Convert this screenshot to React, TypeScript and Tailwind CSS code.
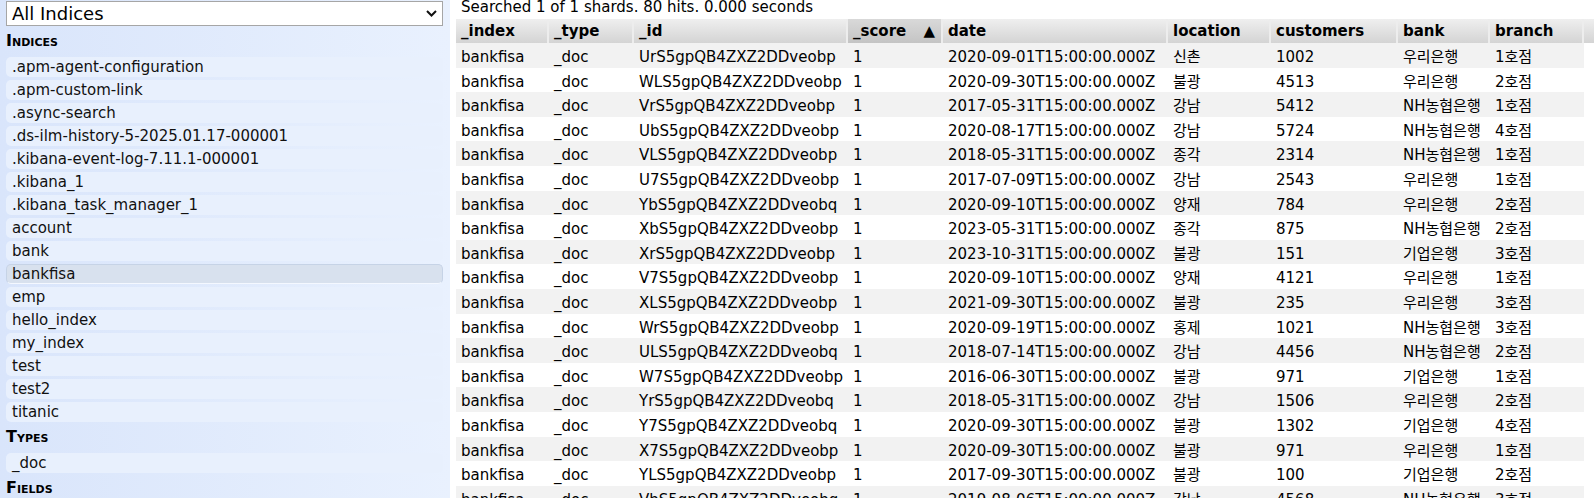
import React from "react";

const FONT = '"DejaVu Sans", "Noto Sans CJK KR", sans-serif';

const indices = [
  ".apm-agent-configuration",
  ".apm-custom-link",
  ".async-search",
  ".ds-ilm-history-5-2025.01.17-000001",
  ".kibana-event-log-7.11.1-000001",
  ".kibana_1",
  ".kibana_task_manager_1",
  "account",
  "bank",
  "bankfisa",
  "emp",
  "hello_index",
  "my_index",
  "test",
  "test2",
  "titanic",
];

const widths = [93, 85, 214, 95, 225, 103, 127, 92, 94];
const headers = ["_index", "_type", "_id", "_score", "date", "location", "customers", "bank", "branch"];

const rows: string[][] = [
  ["UrS5gpQB4ZXZ2DDveobp", "2020-09-01T15:00:00.000Z", "신촌", "1002", "우리은행", "1호점"],
  ["WLS5gpQB4ZXZ2DDveobp", "2020-09-30T15:00:00.000Z", "불광", "4513", "우리은행", "2호점"],
  ["VrS5gpQB4ZXZ2DDveobp", "2017-05-31T15:00:00.000Z", "강남", "5412", "NH농협은행", "1호점"],
  ["UbS5gpQB4ZXZ2DDveobp", "2020-08-17T15:00:00.000Z", "강남", "5724", "NH농협은행", "4호점"],
  ["VLS5gpQB4ZXZ2DDveobp", "2018-05-31T15:00:00.000Z", "종각", "2314", "NH농협은행", "1호점"],
  ["U7S5gpQB4ZXZ2DDveobp", "2017-07-09T15:00:00.000Z", "강남", "2543", "우리은행", "1호점"],
  ["YbS5gpQB4ZXZ2DDveobq", "2020-09-10T15:00:00.000Z", "양재", "784", "우리은행", "2호점"],
  ["XbS5gpQB4ZXZ2DDveobp", "2023-05-31T15:00:00.000Z", "종각", "875", "NH농협은행", "2호점"],
  ["XrS5gpQB4ZXZ2DDveobp", "2023-10-31T15:00:00.000Z", "불광", "151", "기업은행", "3호점"],
  ["V7S5gpQB4ZXZ2DDveobp", "2020-09-10T15:00:00.000Z", "양재", "4121", "우리은행", "1호점"],
  ["XLS5gpQB4ZXZ2DDveobp", "2021-09-30T15:00:00.000Z", "불광", "235", "우리은행", "3호점"],
  ["WrS5gpQB4ZXZ2DDveobp", "2020-09-19T15:00:00.000Z", "홍제", "1021", "NH농협은행", "3호점"],
  ["ULS5gpQB4ZXZ2DDveobq", "2018-07-14T15:00:00.000Z", "강남", "4456", "NH농협은행", "2호점"],
  ["W7S5gpQB4ZXZ2DDveobp", "2016-06-30T15:00:00.000Z", "불광", "971", "기업은행", "1호점"],
  ["YrS5gpQB4ZXZ2DDveobq", "2018-05-31T15:00:00.000Z", "강남", "1506", "우리은행", "2호점"],
  ["Y7S5gpQB4ZXZ2DDveobq", "2020-09-30T15:00:00.000Z", "불광", "1302", "기업은행", "4호점"],
  ["X7S5gpQB4ZXZ2DDveobp", "2020-09-30T15:00:00.000Z", "불광", "971", "우리은행", "1호점"],
  ["YLS5gpQB4ZXZ2DDveobp", "2017-09-30T15:00:00.000Z", "불광", "100", "기업은행", "2호점"],
  ["VbS5gpQB4ZXZ2DDveobq", "2019-08-06T15:00:00.000Z", "강남", "4568", "NH농협은행", "3호점"],
];

function Heading({ children }: { children: React.ReactNode }) {
  return (
    <div className="h-[28px] pt-[5px] leading-[20px] font-bold text-[16px] text-black [font-variant:small-caps]">
      {children}
    </div>
  );
}

function Pill({ label, selected }: { label: string; selected?: boolean }) {
  return (
    <div
      className={
        "mt-[3px] h-[20px] leading-[18px] rounded-[5px] pl-[5px] text-[15px] text-[#111] whitespace-nowrap " +
        (selected
          ? "bg-[#d8e1ee] border border-[#c6d3e6] border-b-[#f4f8ff]"
          : "bg-[#e8f0fd] border border-transparent")
      }
    >
      {label}
    </div>
  );
}

export default function App() {
  return (
    <div
      className="flex w-[1594px] h-[498px] overflow-hidden bg-white text-black"
      style={{ fontFamily: FONT }}
    >
      <div className="w-[450px] shrink-0 h-full pl-[6px] pr-[7px] bg-gradient-to-r from-[#d9e5fb] to-[#e9f1fe]">
        <div className="mt-[1px] h-[25px] border border-[#a6a6a6] bg-white flex items-center justify-between pl-[5px] pr-[5px]">
          <span className="text-[18px] leading-[23px]">All Indices</span>
          <svg width="11" height="7" viewBox="0 0 11 7">
            <polyline points="1,1 5.5,5.5 10,1" fill="none" stroke="#111" strokeWidth="2" />
          </svg>
        </div>
        <Heading>Indices</Heading>
        {indices.map((i) => (
          <Pill key={i} label={i} selected={i === "bankfisa"} />
        ))}
        <Heading>Types</Heading>
        <Pill label="_doc" />
        <Heading>Fields</Heading>
      </div>

      <div className="ml-[6px] flex-1 min-w-0 overflow-hidden text-[15px]">
        <div className="h-[19px] leading-[14px] pl-[5px] whitespace-nowrap">
          Searched 1 of 1 shards. 80 hits. 0.000 seconds
        </div>
        <div className="flex h-[24px] leading-[24px] font-bold bg-gradient-to-b from-[#efefef] to-[#d4d4d4]">
          {headers.map((h, idx) => (
            <div
              key={h}
              className={
                "shrink-0 pl-[5px] border-r-2 border-[#ededed] whitespace-nowrap " +
                (h === "_score"
                  ? "flex justify-between pr-[6px] bg-gradient-to-b from-[#d9d9d9] to-[#c4c4c4]"
                  : "")
              }
              style={{ width: widths[idx] }}
            >
              {h === "_score" ? (
                <>
                  <span>_score</span>
                  <span className="font-normal">▲</span>
                </>
              ) : (
                h
              )}
            </div>
          ))}
          <div className="flex-1" />
        </div>
        {rows.map((r, ri) => {
          const cells = ["bankfisa", "_doc", r[0], "1", r[1], r[2], r[3], r[4], r[5]];
          return (
            <div
              key={ri}
              className={
                "flex w-[1128px] h-[24.6px] " + (ri % 2 === 0 ? "bg-[#f2f2f2]" : "bg-white")
              }
            >
              {cells.map((c, ci) => (
                <div
                  key={ci}
                  className="shrink-0 h-[24.6px] leading-[28px] pl-[5px] whitespace-nowrap overflow-hidden"
                  style={{ width: widths[ci] }}
                >
                  {c}
                </div>
              ))}
            </div>
          );
        })}
      </div>
    </div>
  );
}
